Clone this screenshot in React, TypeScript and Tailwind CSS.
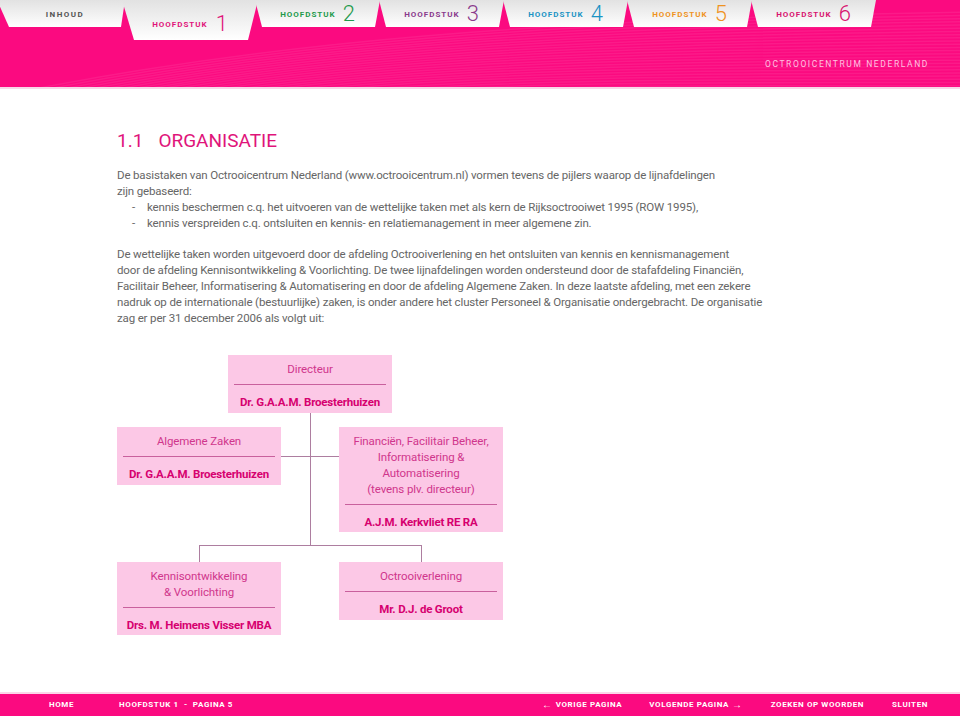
import React from "react";

const font = { fontFamily: "Roboto, 'Liberation Sans', sans-serif" };

const tabs = [
  { num: "2", color: "text-[#1f9a4c]" },
  { num: "3", color: "text-[#8a3b8c]" },
  { num: "4", color: "text-[#1b93c4]" },
  { num: "5", color: "text-[#ef931f]" },
  { num: "6", color: "text-[#d8136f]" },
];

function Stripes() {
  const lines = Array.from({ length: 26 }, (_, i) => i);
  return (
    <svg className="absolute inset-0" width="960" height="87" viewBox="0 0 960 87" preserveAspectRatio="none">
      {lines.map((i) => (
        <path
          key={i}
          d={`M -20 ${100 + i * 3} C 260 ${40 + i * 1.5}, 560 ${18 + i * 3}, 980 ${12 + i * 3.2}`}
          fill="none"
          stroke="#ffffff"
          strokeOpacity={0.07}
          strokeWidth={1.5}
        />
      ))}
    </svg>
  );
}

function Box({
  left,
  top,
  height,
  titles,
  name,
}: {
  left: number;
  top: number;
  height: number;
  titles: string[];
  name: string;
}) {
  return (
    <div
      className="absolute w-[164px] bg-[#fcc8e6] flex flex-col items-center px-[6px] pt-[6px]"
      style={{ left, top, height }}
    >
      <div className="text-[11.5px] leading-[16px] tracking-[-0.1px] text-[#d0368c] text-center w-full">
        {titles.map((t) => (
          <div key={t}>{t}</div>
        ))}
      </div>
      <div className="w-full h-px bg-[#c9609d] mt-[7px]" />
      <div className="text-[11.5px] leading-[16px] tracking-[-0.2px] font-bold text-[#d6006f] mt-[9px] whitespace-nowrap">{name}</div>
    </div>
  );
}

export default function App() {
  return (
    <div className="w-[960px] h-[716px] bg-white flex flex-col overflow-hidden" style={font}>
      {/* ── HEADER ── */}
      <header className="relative h-[87px] bg-[#fb0a80] shrink-0">
        <Stripes />
        <div className="relative flex items-start -ml-[3px]">
          <div className="w-[128px] h-[27px] -mr-[3px] bg-gradient-to-b from-[#e2e2e2] to-white [clip-path:polygon(0_0,100%_0,calc(100%-4px)_100%,12px_100%)] flex items-center justify-center pl-[8px]">
            <span className="text-[8px] font-bold tracking-[1.5px] text-[#555] mt-[2px]">INHOUD</span>
          </div>
          <div className="w-[136px] h-[40px] -mr-[3px] bg-gradient-to-b from-[#e2e2e2] to-white [clip-path:polygon(0_0,100%_0,calc(100%-10px)_100%,12px_100%)] flex items-end justify-center pb-[4px]">
            <span className="text-[8px] font-bold tracking-[1px] text-[#e0147a] mb-[5px]">HOOFDSTUK</span>
            <span className="text-[22px] leading-[24px] font-light text-[#e0147a] ml-[8px]">1</span>
          </div>
          {tabs.map((t) => (
            <div
              key={t.num}
              className="w-[125px] h-[27px] -mr-[1px] bg-gradient-to-b from-[#e2e2e2] to-white [clip-path:polygon(0_0,100%_0,calc(100%-5px)_100%,7px_100%)] flex items-center justify-center"
            >
              <span className={`text-[8px] font-bold tracking-[1px] mt-[2px] ${t.color}`}>HOOFDSTUK</span>
              <span className={`text-[22px] leading-[24px] font-light ml-[7px] ${t.color}`}>{t.num}</span>
            </div>
          ))}
        </div>
        <div className="absolute right-[31px] top-[58px] text-[8.5px] tracking-[1.6px] text-[#ffc3e1]">
          OCTROOICENTRUM NEDERLAND
        </div>
      </header>
      <div className="h-[2px] bg-[#f7d9e8] shrink-0" />

      {/* ── CONTENT ── */}
      <main className="flex-1 pl-[117px] pt-[40px]">
        <h1 className="text-[19px] leading-[24px] text-[#e0147a] flex">
          <span>1.1</span>
          <span className="ml-[15px]">ORGANISATIE</span>
        </h1>
        <div className="mt-[14px] text-[11.5px] leading-[16px] tracking-[-0.15px] text-[#666] whitespace-nowrap">
          <p>
            De basistaken van Octrooicentrum Nederland (www.octrooicentrum.nl) vormen tevens de pijlers waarop de lijnafdelingen
            <br />
            zijn gebaseerd:
          </p>
          <ul>
            <li className="flex">
              <span className="w-[30px] pl-[15px]">-</span>
              <span>kennis beschermen c.q. het uitvoeren van de wettelijke taken met als kern de Rijksoctrooiwet 1995 (ROW 1995),</span>
            </li>
            <li className="flex">
              <span className="w-[30px] pl-[15px]">-</span>
              <span>kennis verspreiden c.q. ontsluiten en kennis- en relatiemanagement in meer algemene zin.</span>
            </li>
          </ul>
          <p className="mt-[15px]">
            De wettelijke taken worden uitgevoerd door de afdeling Octrooiverlening en het ontsluiten van kennis en kennismanagement
            <br />
            door de afdeling Kennisontwikkeling &amp; Voorlichting. De twee lijnafdelingen worden ondersteund door de stafafdeling Financiën,
            <br />
            Facilitair Beheer, Informatisering &amp; Automatisering en door de afdeling Algemene Zaken. In deze laatste afdeling, met een zekere
            <br />
            nadruk op de internationale (bestuurlijke) zaken, is onder andere het cluster Personeel &amp; Organisatie ondergebracht. De organisatie
            <br />
            zag er per 31 december 2006 als volgt uit:
          </p>
        </div>

        {/* ── ORGANOGRAM ── */}
        <div className="relative mt-[29px] h-[290px] w-[400px]">
          <div className="absolute left-[193px] top-[58px] w-px h-[132px] bg-[#ad7ea0]" />
          <div className="absolute left-[164px] top-[101px] w-[58px] h-px bg-[#ad7ea0]" />
          <div className="absolute left-[82px] top-[190px] w-[223px] h-px bg-[#ad7ea0]" />
          <div className="absolute left-[82px] top-[190px] w-px h-[17px] bg-[#ad7ea0]" />
          <div className="absolute left-[304px] top-[190px] w-px h-[17px] bg-[#ad7ea0]" />

          <Box left={111} top={0} height={58} titles={["Directeur"]} name="Dr. G.A.A.M. Broesterhuizen" />
          <Box left={0} top={72} height={58} titles={["Algemene Zaken"]} name="Dr. G.A.A.M. Broesterhuizen" />
          <Box
            left={222}
            top={72}
            height={105}
            titles={["Financiën, Facilitair Beheer,", "Informatisering &", "Automatisering", "(tevens plv. directeur)"]}
            name="A.J.M. Kerkvliet RE RA"
          />
          <Box
            left={0}
            top={207}
            height={73}
            titles={["Kennisontwikkeling", "& Voorlichting"]}
            name="Drs. M. Heimens Visser MBA"
          />
          <Box left={222} top={207} height={58} titles={["Octrooiverlening"]} name="Mr. D.J. de Groot" />
        </div>
      </main>

      {/* ── FOOTER ── */}
      <div className="h-[2px] bg-[#fbd6e8] shrink-0" />
      <footer className="h-[22px] bg-[#fb0a80] shrink-0 flex items-center text-[8px] leading-[10px] font-bold tracking-[0.6px] text-white">
        <span className="ml-[49px]">HOME</span>
        <span className="ml-[45px]">HOOFDSTUK 1&nbsp;&nbsp;-&nbsp;&nbsp;PAGINA 5</span>
        <span className="ml-auto flex items-center gap-[3px]">
          <span className="text-[10px] leading-[10px]">←</span>
          <span>VORIGE PAGINA</span>
        </span>
        <span className="ml-[27px] flex items-center gap-[3px]">
          <span>VOLGENDE PAGINA</span>
          <span className="text-[10px] leading-[10px]">→</span>
        </span>
        <span className="ml-[28px]">ZOEKEN OP WOORDEN</span>
        <span className="ml-[28px] mr-[32px]">SLUITEN</span>
      </footer>
    </div>
  );
}
